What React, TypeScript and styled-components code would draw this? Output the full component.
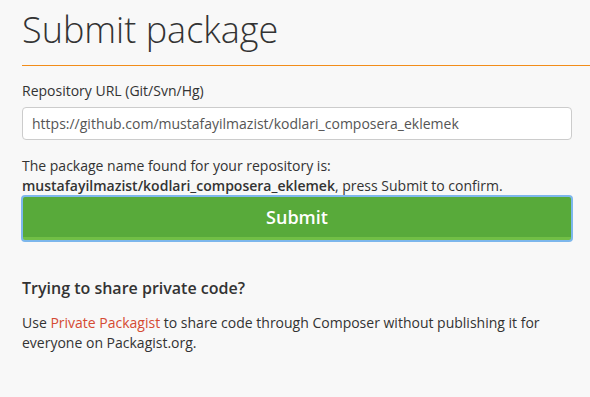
import styled, { createGlobalStyle } from "styled-components";

const GlobalStyle = createGlobalStyle`
    html, body {
        margin: 0;
        padding: 0;
        background: #f8f8f8;
    }
    body {
        font-family: "Open Sans", "DejaVu Sans", sans-serif;
        color: #333333;
        font-size: 14px;
        line-height: 20px;
    }
`;

const Page = styled.div`
    padding: 0 18px 0 22px;
`;

const Title = styled.h1`
    margin: 0;
    padding-top: 7px;
    font-size: 36px;
    line-height: 46px;
    font-weight: 300;
    color: #333333;
`;

const Rule = styled.hr`
    margin: 12px -18px 0 0;
    border: 0;
    border-top: 1px solid #f28d1a;
`;

const Form = styled.form`
    width: 550px;
    padding-top: 15px;
`;

const Label = styled.label`
    display: block;
    margin-bottom: 6px;
`;

const Input = styled.input`
    display: block;
    box-sizing: border-box;
    width: 100%;
    height: 33px;
    padding: 6px 9px;
    font: inherit;
    color: #555555;
    background: #ffffff;
    border: 1px solid #cccccc;
    border-radius: 4px;
`;

const Notice = styled.p`
    margin: 16px 0 0;

    strong {
        font-weight: 600;
    }
`;

const SubmitButton = styled.button`
    display: block;
    box-sizing: border-box;
    width: 100%;
    height: 45px;
    margin-top: 0;
    font: inherit;
    font-size: 18px;
    font-weight: 600;
    color: #ffffff;
    background: #58aa3a;
    border: 1px solid #58aa3a;
    border-bottom: 4px solid #71bf46;
    border-radius: 3px;
    outline: 2px solid #7db7ec;
    outline-offset: -1px;
    cursor: pointer;
`;

const Subheading = styled.h3`
    margin: 36px 0 0;
    font-size: 16px;
    line-height: 22px;
    font-weight: 600;
    color: #333333;
`;

const Text = styled.p`
    margin: 14px 0 0;
    line-height: 20px;
`;

const Link = styled.a`
    color: #d54a32;
    text-decoration: none;
`;

export default function App() {
    return (
        <>
            <GlobalStyle />
            <Page>
                <Title>Submit package</Title>
                <Rule />
                <Form onSubmit={(e) => e.preventDefault()}>
                    <Label htmlFor="repo">Repository URL (Git/Svn/Hg)</Label>
                    <Input
                        id="repo"
                        type="text"
                        defaultValue="https://github.com/mustafayilmazist/kodlari_composera_eklemek"
                    />
                    <Notice>
                        The package name found for your repository is:
                        <br />
                        <strong>mustafayilmazist/kodlari_composera_eklemek</strong>, press Submit
                        to confirm.
                    </Notice>
                    <SubmitButton type="submit">Submit</SubmitButton>
                    <Subheading>Trying to share private code?</Subheading>
                    <Text>
                        Use <Link href="#">Private Packagist</Link> to share code through Composer
                        without publishing it for everyone on Packagist.org.
                    </Text>
                </Form>
            </Page>
        </>
    );
}
